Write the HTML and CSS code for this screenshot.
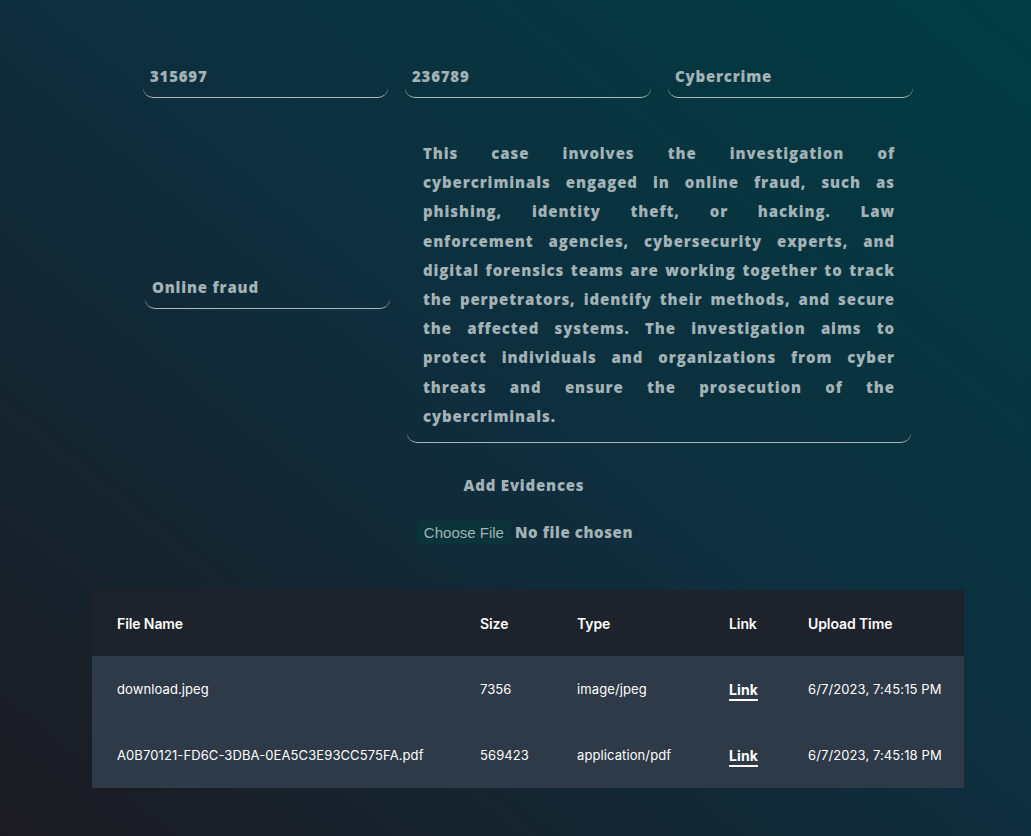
FILE: index.html
```html
<!DOCTYPE html>
<html lang="en">
<head>
<meta charset="utf-8">
<title>Case details</title>
<link rel="stylesheet" href="styles.css">
</head>
<body>
<main class="page">
  <section class="form">
    <div class="row-top">
      <div class="field">315697</div>
      <div class="field">236789</div>
      <div class="field">Cybercrime</div>
    </div>
    <div class="row-desc">
      <div class="field">Online fraud</div>
      <div class="field field-area">This case involves the investigation of<br>cybercriminals engaged in online fraud, such as<br>phishing, identity theft, or hacking. Law<br>enforcement agencies, cybersecurity experts, and<br>digital forensics teams are working together to track<br>the perpetrators, identify their methods, and secure<br>the affected systems. The investigation aims to<br>protect individuals and organizations from cyber<br>threats and ensure the prosecution of the<br>cybercriminals.</div>
    </div>
    <div class="evidence">
      <div class="evidence-title">Add Evidences</div>
      <div class="file-picker">
        <span class="file-btn">Choose File</span>
        <span class="file-status">No file chosen</span>
      </div>
    </div>
  </section>
  <table class="files">
    <colgroup>
      <col class="c-name"><col class="c-size"><col class="c-type"><col class="c-link"><col class="c-time">
    </colgroup>
    <thead>
      <tr><th>File Name</th><th>Size</th><th>Type</th><th>Link</th><th>Upload Time</th></tr>
    </thead>
    <tbody>
      <tr><td>download.jpeg</td><td>7356</td><td>image/jpeg</td><td><a class="link" href="#">Link</a></td><td>6/7/2023, 7:45:15 PM</td></tr>
      <tr><td>A0B70121-FD6C-3DBA-0EA5C3E93CC575FA.pdf</td><td>569423</td><td>application/pdf</td><td><a class="link" href="#">Link</a></td><td>6/7/2023, 7:45:18 PM</td></tr>
    </tbody>
  </table>
</main>
</body>
</html>
```

FILE: styles.css
```css
html, body {
  margin: 0;
  padding: 0;
}
body {
  min-height: 836px;
  background: linear-gradient(to top right, #1c1a21 0%, #0f2e3d 50%, #003c42 100%);
  font-family: "Open Sans", "Liberation Sans", sans-serif;
}
.page {
  width: 872px;
  margin-left: 92px;
  padding-top: 55px;
  padding-bottom: 48px;
}
.form {
  width: 770px;
  margin-left: 51px;
}
.row-top {
  display: grid;
  grid-template-columns: 245px 246px 245px;
  column-gap: 17px;
}
.field {
  height: 43px;
  display: flex;
  align-items: center;
  padding: 0 7px;
  box-sizing: border-box;
  border-bottom: 1px solid #a9b8bc;
  border-radius: 10px;
  color: #a2b2b7;
  font-weight: 800;
  font-size: 15px;
  line-height: 20px;
  letter-spacing: 0.8px;
}
.row-desc {
  margin-top: 33px;
  margin-left: 2px;
  display: grid;
  grid-template-columns: 245px 504px;
  column-gap: 17px;
  align-items: center;
}
.field-area {
  height: auto;
  display: block;
  padding: 8px 16px 11px;
  line-height: 29.2px;
  text-align: justify;
  text-align-last: justify;
  letter-spacing: 0.9px;
}
.evidence {
  margin-top: 32px;
  display: flex;
  flex-direction: column;
  align-items: center;
}
.evidence-title {
  color: #a2b2b7;
  font-weight: 800;
  font-size: 15px;
  line-height: 20px;
  letter-spacing: 0.8px;
  padding-right: 8px;
}
.file-picker {
  margin-top: 25px;
  display: flex;
  align-items: center;
  gap: 4px;
  padding-right: 6px;
}
.file-btn {
  height: 24px;
  display: flex;
  align-items: center;
  padding: 0 7px;
  border-radius: 4px;
  background: #0a3439;
  color: #a3b3b7;
  font-family: "Liberation Sans", Arial, sans-serif;
  font-size: 15px;
}
.file-status {
  color: #a2b2b7;
  font-weight: 800;
  font-size: 15px;
  letter-spacing: 0.6px;
}
.files {
  margin-top: 46px;
  width: 872px;
  border-collapse: collapse;
  table-layout: fixed;
  font-family: Inter, "Noto Sans", sans-serif;
  font-size: 13px;
  color: #ffffff;
}
.c-name { width: 363px; }
.c-size { width: 97px; }
.c-type { width: 152px; }
.c-link { width: 79px; }
.c-time { width: 181px; }
.files th, .files td {
  height: 66px;
  padding: 0 0 0 25px;
  text-align: left;
  vertical-align: middle;
  white-space: nowrap;
}
.files thead tr {
  background: #1e232b;
}
.files th {
  font-size: 14px;
  font-weight: 600;
  letter-spacing: -0.1px;
}
.files tbody tr {
  background: #2e3a48;
}
.files td {
  font-weight: 400;
  letter-spacing: 0.1px;
}
.link {
  color: #ffffff;
  font-size: 14px;
  font-weight: 700;
  text-decoration: underline;
  text-decoration-thickness: 1.5px;
  text-underline-offset: 4px;
}
```
